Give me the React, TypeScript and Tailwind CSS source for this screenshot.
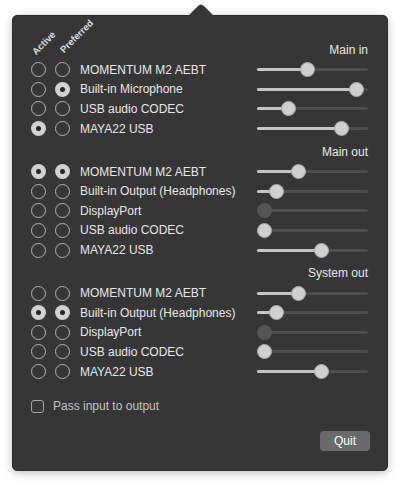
import React from "react";

type Row = { name: string; active: boolean; preferred: boolean; value: number; disabled?: boolean };

const sections: { title: string; rows: Row[] }[] = [
  {
    title: "Main in",
    rows: [
      { name: "MOMENTUM M2 AEBT", active: false, preferred: false, value: 0.45 },
      { name: "Built-in Microphone", active: false, preferred: true, value: 0.96 },
      { name: "USB audio CODEC", active: false, preferred: false, value: 0.25 },
      { name: "MAYA22 USB", active: true, preferred: false, value: 0.8 },
    ],
  },
  {
    title: "Main out",
    rows: [
      { name: "MOMENTUM M2 AEBT", active: true, preferred: true, value: 0.35 },
      { name: "Built-in Output (Headphones)", active: false, preferred: false, value: 0.13 },
      { name: "DisplayPort", active: false, preferred: false, value: 0, disabled: true },
      { name: "USB audio CODEC", active: false, preferred: false, value: 0 },
      { name: "MAYA22 USB", active: false, preferred: false, value: 0.59 },
    ],
  },
  {
    title: "System out",
    rows: [
      { name: "MOMENTUM M2 AEBT", active: false, preferred: false, value: 0.35 },
      { name: "Built-in Output (Headphones)", active: true, preferred: true, value: 0.13 },
      { name: "DisplayPort", active: false, preferred: false, value: 0, disabled: true },
      { name: "USB audio CODEC", active: false, preferred: false, value: 0 },
      { name: "MAYA22 USB", active: false, preferred: false, value: 0.59 },
    ],
  },
];

function Radio({ on }: { on: boolean }) {
  if (on) {
    return (
      <div className="w-[15px] h-[15px] rounded-full bg-[#d2d2d2] flex items-center justify-center">
        <div className="w-[5px] h-[5px] rounded-full bg-[#262626]" />
      </div>
    );
  }
  return <div className="w-[15px] h-[15px] rounded-full border-[1.5px] border-[#b4b4b4]" />;
}

function Slider({ value, disabled }: { value: number; disabled?: boolean }) {
  const W = 111;
  const K = 15;
  const left = value * (W - K);
  return (
    <div className="relative w-[111px] h-[15px]">
      <div className="absolute left-0 right-0 top-[6px] h-[3px] rounded-full bg-[#4e4e4e]" />
      {!disabled && (
        <div
          className="absolute left-0 top-[6px] h-[3px] rounded-full bg-[#c6c6c6]"
          style={{ width: left + K / 2 }}
        />
      )}
      <div
        className={
          disabled
            ? "absolute top-0 w-[15px] h-[15px] rounded-full bg-[#555555]"
            : "absolute top-0 w-[15px] h-[15px] rounded-full bg-[#cfcfcf] border border-[#a8a8a8]"
        }
        style={{ left }}
      />
    </div>
  );
}

export default function App() {
  return (
    <div className="w-[400px] h-[487px] bg-white relative" style={{ fontFamily: '"Liberation Sans", Arial, sans-serif' }}>
      <div className="absolute left-[12px] top-[15px] w-[376px] h-[456px] rounded-[5px] bg-[#363636] shadow-[0_2px_10px_rgba(0,0,0,0.25)] border border-[#2a2a2a]">
        <svg className="absolute left-[174px] top-[-12px]" width="28" height="13" viewBox="0 0 28 13">
          <path d="M0 13 L11 2 Q14 -1 17 2 L28 13 Z" fill="#363636" />
        </svg>
        <div className="flex flex-col pt-[24px] pl-[18px] pr-[19px]">
          {sections.map((s, si) => (
            <div key={s.title} className={si > 0 ? "flex flex-col mt-[3.5px]" : "flex flex-col"}>
              <div className="h-[20px] flex items-center justify-between">
                <div className="flex gap-[9px] h-full">
                  {si === 0 && (
                    <>
                      <div className="relative w-[15px] h-full">
                        <span className="absolute left-[6px] bottom-[4px] origin-bottom-left -rotate-45 whitespace-nowrap text-[9.5px] font-bold leading-none text-[#dcdcdc]">
                          Active
                        </span>
                      </div>
                      <div className="relative w-[15px] h-full">
                        <span className="absolute left-[10px] bottom-[6px] origin-bottom-left -rotate-45 whitespace-nowrap text-[9.5px] font-bold leading-none text-[#dcdcdc]">
                          Preferred
                        </span>
                      </div>
                    </>
                  )}
                </div>
                <span className="text-[12px] text-[#e8e8e8]">{s.title}</span>
              </div>
              {s.rows.map((r, i) => (
                <div key={i} className="h-[19.6px] flex items-center">
                  <div className="flex gap-[9px]">
                    <Radio on={r.active} />
                    <Radio on={r.preferred} />
                  </div>
                  <span className="ml-[10px] text-[12px] text-[#e8e8e8] flex-1 whitespace-nowrap">{r.name}</span>
                  <Slider value={r.value} disabled={r.disabled} />
                </div>
              ))}
            </div>
          ))}
          <div className="mt-[15px] h-[20px] flex items-center">
            <div className="w-[13px] h-[13px] rounded-[3px] border-[1.5px] border-[#a6a6a6]" />
            <span className="ml-[9px] text-[12px] text-[#c4c4c4]">Pass input to output</span>
          </div>
          <div className="mt-[15px] flex justify-end">
            <div className="w-[50px] h-[20px] mr-[-2px] rounded-[4px] bg-[#6a6a6a] flex items-center justify-center text-[12px] text-white">
              Quit
            </div>
          </div>
        </div>
      </div>
    </div>
  );
}
